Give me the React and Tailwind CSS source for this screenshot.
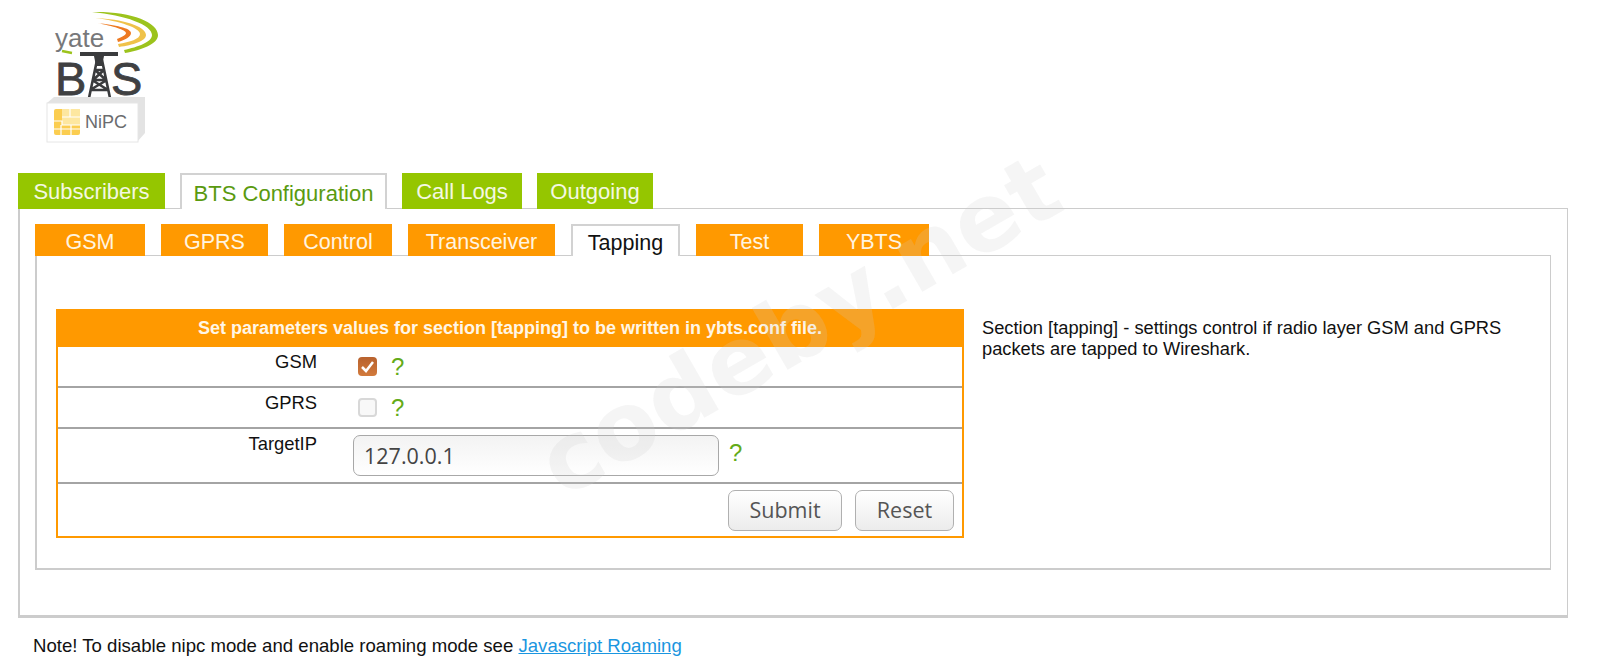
import React from 'react';

const mainTabs = [
  { label: 'Subscribers', w: 'w-[147px]' },
  { label: 'BTS Configuration', w: 'w-[207px]', active: true },
  { label: 'Call Logs', w: 'w-[120px]' },
  { label: 'Outgoing', w: 'w-[116px]' },
];

const subTabs = [
  { label: 'GSM', w: 'w-[110px]' },
  { label: 'GPRS', w: 'w-[107px]' },
  { label: 'Control', w: 'w-[108px]' },
  { label: 'Transceiver', w: 'w-[147px]' },
  { label: 'Tapping', w: 'w-[109px]', active: true },
  { label: 'Test', w: 'w-[107px]' },
  { label: 'YBTS', w: 'w-[110px]' },
];

const Logo = () => (
  <svg width="170" height="150" viewBox="0 0 170 150" className="block">
    <path d="M92 12 C130 11 158 22 158 35 C158 44 142 50 125 53 L124 50 C138 47 152 42 152 35 C152 25 125 15 92 12 Z" fill="#9cc31c" />
    <path d="M95 18 C122 19 146 26 146 35 C146 41 133 45 119 47 L118 44 C130 42 140 39 140 34 C140 28 120 21 95 18 Z" fill="#efc24a" />
    <path d="M97 23 C115 25 131 28 131 33 C131 37 125 40 118 42 L117 39 C122 37 126 35 126 33 C126 30 113 26 97 23 Z" fill="#ee7a22" />
    <path d="M62 51 L72 53" stroke="#9cc31c" strokeWidth="2.5" />
    <text x="55" y="47" fontFamily="Liberation Sans, sans-serif" fontSize="26" fill="#77787a">yate</text>
    <text x="55" y="95" fontFamily="Liberation Sans, sans-serif" fontSize="47" fill="#3f4042" stroke="#3f4042" strokeWidth="0.8">B</text>
    <text x="111" y="95" fontFamily="Liberation Sans, sans-serif" fontSize="47" fill="#3f4042" stroke="#3f4042" strokeWidth="0.8">S</text>
    <path d="M80 54 H118" stroke="#3a3b3d" strokeWidth="4" />
    <path d="M94 56 H104 L102 66 H96 Z" fill="#3a3b3d" />
    <path d="M97 60 L89 98 M102 60 L110 98 M94 70 H105 M92 80 H107 M91 90 H108 M95 70 L106 80 M104 70 L93 80 M92 80 L108 90 M107 80 L90 90" fill="none" stroke="#3a3b3d" strokeWidth="2.6" />
    <path d="M47 103 L54 97 H145 V133 L137 142 V103 Z" fill="#e3e3e3" />
    <rect x="47" y="103" width="91" height="39" fill="#ffffff" stroke="#e6e6e6" />
    <rect x="54" y="109" width="26" height="26" rx="2" fill="#fbcd50" />
    <path d="M62 109 H80 V125 H62 Z" fill="#fde7a0" />
    <path d="M54 121 H62 V125 H80 M62 117 H80 M70 109 V117 M61 125 V135 M71 125 V135 M54 129 H80" stroke="#fff" strokeWidth="1.2" fill="none" />
    <text x="85" y="128" fontFamily="Liberation Sans, sans-serif" fontSize="18" fill="#6b6c6e">NiPC</text>
  </svg>
);

const Help = () => <span className="text-[24px] leading-none text-[#64ab18]">?</span>;

const Row = ({ label, children, className }) => (
  <div className={`flex border-b-2 border-[#a4a4a4] ${className}`}>
    <div className="w-[259px] pt-[4px] text-right text-[18.4px] leading-[21px] text-[#111]">{label}</div>
    {children}
  </div>
);

const App = () => (
  <div className="relative h-[670px] w-[1600px] overflow-hidden bg-white font-['Liberation_Sans',sans-serif]">
    <div className="h-[173px]">
      <Logo />
    </div>

    <div className="ml-[18px] mr-[32px]">
      <div className="relative z-10 -mb-px flex gap-[15px]">
        {mainTabs.map((t) => (
          <div
            key={t.label}
            className={
              t.active
                ? `${t.w} flex h-[36px] items-center justify-center border-2 border-b-0 border-[#d2d2d2] bg-white pt-[2px] text-[22px] text-[#5a9a10]`
                : `${t.w} flex h-[36px] items-center justify-center bg-[#95c600] text-[22px] text-[#f4f8e2]`
            }
          >
            {t.label}
          </div>
        ))}
      </div>

      <div className="h-[410px] border border-b-[3px] border-l-2 border-[#cccccc] px-[15px] pt-[15px]">
        <div className="relative z-10 -mb-px flex gap-[16px]">
          {subTabs.map((t) => (
            <div
              key={t.label}
              className={
                t.active
                  ? `${t.w} flex h-[32px] items-center justify-center border-2 border-b-0 border-[#d2d2d2] bg-white pt-[5px] text-[21.5px] text-[#111]`
                  : `${t.w} flex h-[32px] items-center justify-center bg-[#ff9900] pt-[5px] text-[21.5px] text-[#fff4e0]`
              }
            >
              {t.label}
            </div>
          ))}
        </div>

        <div className="flex h-[315px] w-[1516px] border border-b-2 border-l-2 border-[#cccccc] pl-[19px] pt-[53px]">
          <div className="h-[229px] w-[908px] shrink-0">
            <div className="flex h-[38px] items-center justify-center bg-[#ff9900] text-[18px] font-bold text-[#fff6e6]">
              Set parameters values for section [tapping] to be written in ybts.conf file.
            </div>
            <div className="border-x-2 border-b-2 border-[#ff9900]">
              <Row label="GSM" className="h-[41px]">
                <div className="ml-[41px] mt-[10px] flex h-[19px] w-[19px] items-center justify-center rounded-[4px] bg-linear-to-b from-[#b8622e] to-[#d27a3c]">
                  <svg width="15" height="13" viewBox="0 0 15 13">
                    <path d="M2 7 L6 11 L13 2" fill="none" stroke="#fff" strokeWidth="2.5" />
                  </svg>
                </div>
                <div className="ml-[14px] mt-[8px]"><Help /></div>
              </Row>
              <Row label="GPRS" className="h-[41px]">
                <div className="ml-[41px] mt-[10px] h-[19px] w-[19px] rounded-[4px] border-2 border-[#d8d8d8] bg-[#f8f8f8]" />
                <div className="ml-[14px] mt-[8px]"><Help /></div>
              </Row>
              <Row label="TargetIP" className="h-[55px]">
                <input
                  readOnly
                  value="127.0.0.1"
                  className="ml-[36px] mt-[6px] h-[41px] w-[366px] rounded-[7px] border border-[#a8a8a8] bg-linear-to-b from-[#f3f3f3] to-white pl-[10px] font-['Open_Sans',sans-serif] text-[21.5px] text-[#444]"
                />
                <div className="ml-[10px] mt-[12px]"><Help /></div>
              </Row>
              <div className="flex h-[52px] items-start justify-end gap-[13px] pr-[8px] pt-[6px]">
                <button className="h-[41px] w-[114px] rounded-[7px] border border-[#b0b0b0] bg-linear-to-b from-white to-[#ececec] font-['Open_Sans',sans-serif] text-[21.5px] text-[#555]">Submit</button>
                <button className="h-[41px] w-[99px] rounded-[7px] border border-[#b0b0b0] bg-linear-to-b from-white to-[#ececec] font-['Open_Sans',sans-serif] text-[21.5px] text-[#555]">Reset</button>
              </div>
            </div>
          </div>
          <p className="ml-[18px] mt-[8px] w-[545px] text-[18.3px] leading-[21px] text-[#111]">
            Section [tapping] - settings control if radio layer GSM and GPRS packets are tapped to Wireshark.
          </p>
        </div>
      </div>

      <p className="ml-[15px] mt-[17px] text-[18.6px] leading-[21px] text-[#111]">
        Note! To disable nipc mode and enable roaming mode see{' '}
        <a href="#roaming" className="text-[#1a96e0] underline">Javascript Roaming</a>
      </p>
    </div>

    {/* watermark lies over the panels */}
    <div className="pointer-events-none absolute left-[508px] top-[279px] z-20 -rotate-30 whitespace-nowrap font-['DejaVu_Sans',sans-serif] text-[94px] font-bold leading-none text-[rgba(204,204,204,0.2)]">
      codeby.net
    </div>
  </div>
);

export default App;
